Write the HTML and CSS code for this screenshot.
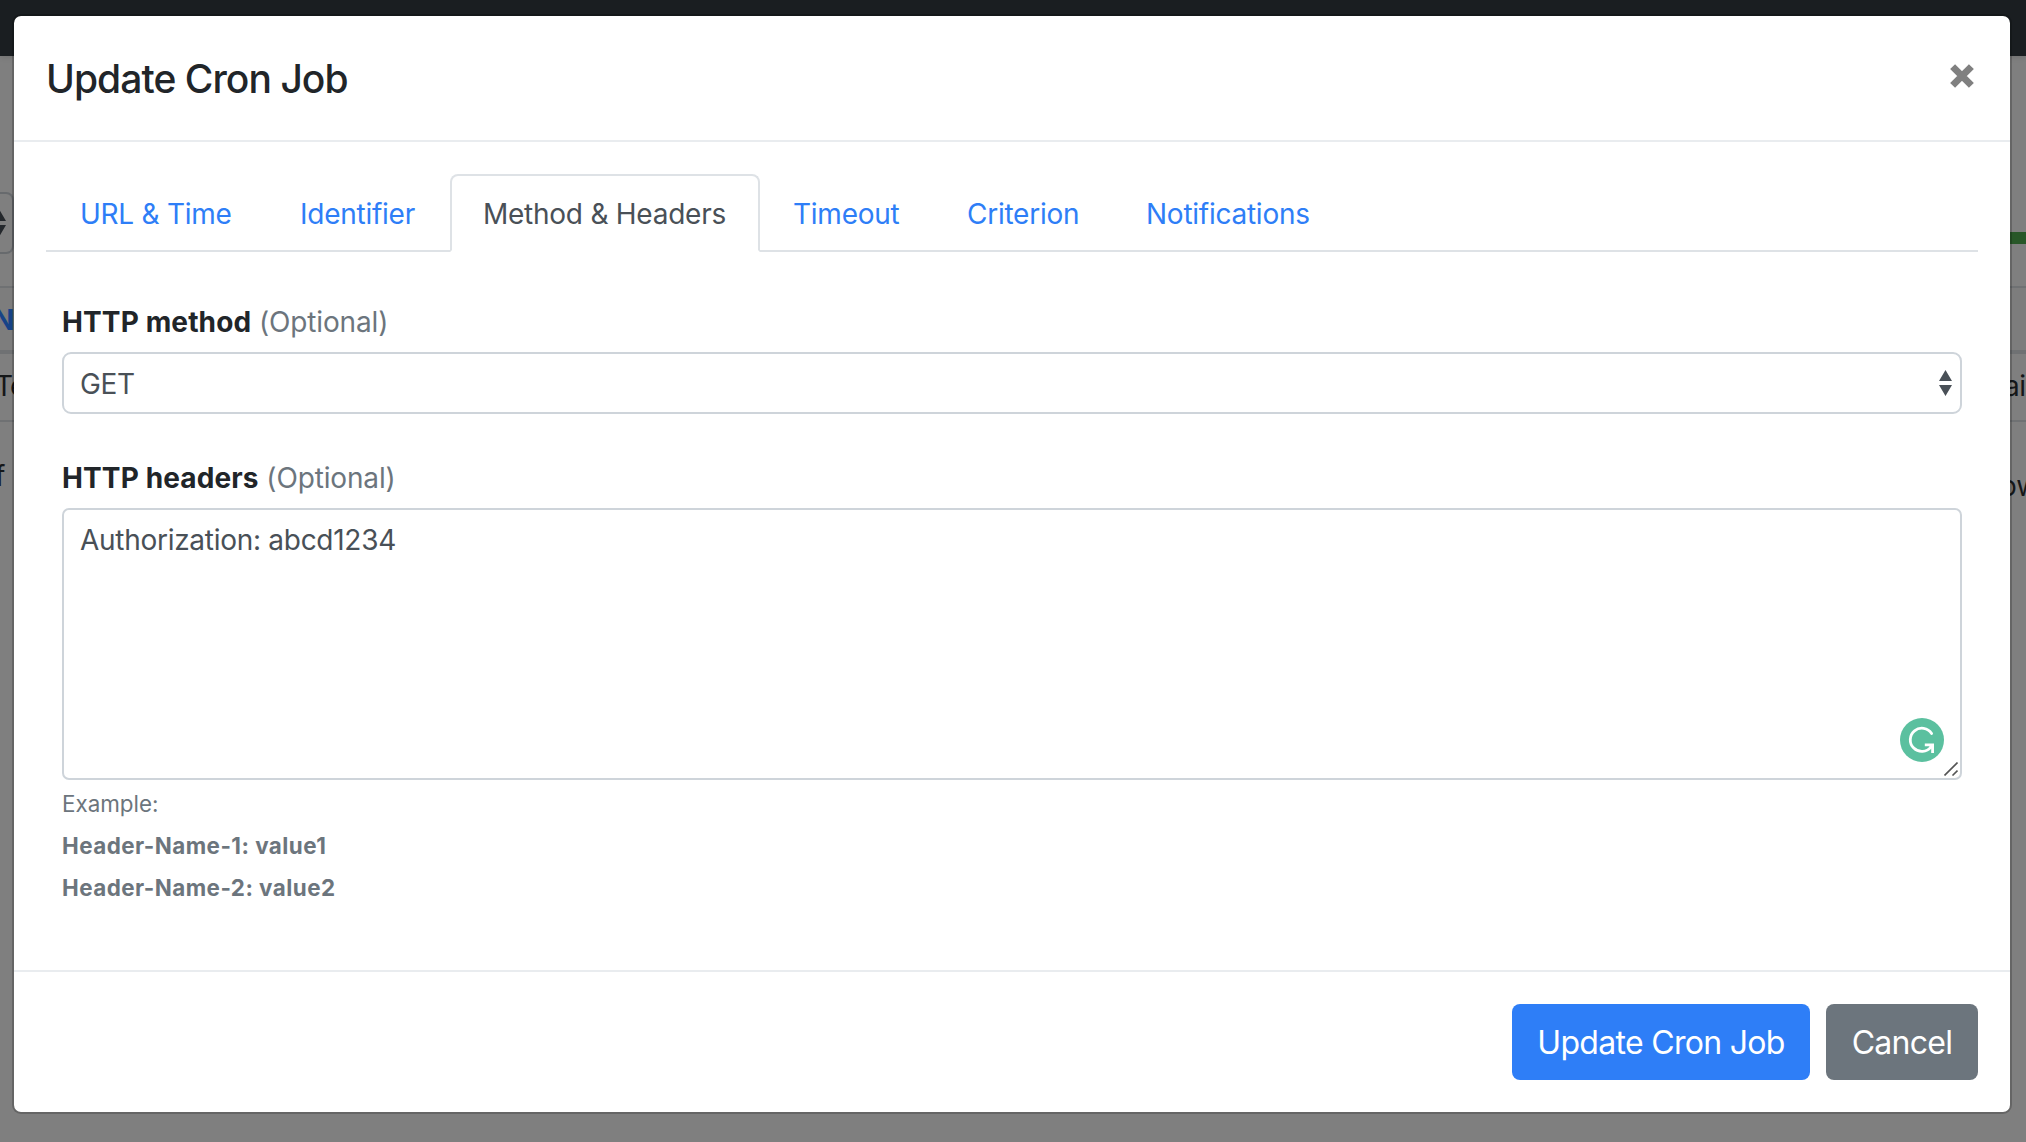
FILE: index.html
```html
<!DOCTYPE html>
<html lang="en">
<head>
<meta charset="utf-8">
<title>Update Cron Job</title>
<link rel="stylesheet" href="styles.css">
</head>
<body>
<div class="page">
  <div class="navbar"></div>
  <div class="toolbar">
    <div class="page-select">
      <svg width="13" height="26" viewBox="0 0 13 26"><path d="M6.5 0L13 11H0zM0 15h13L6.5 26z" fill="#24282c"/></svg>
    </div>
    <div class="progress"></div>
  </div>
  <div class="row row-head"><span class="cell-name">N</span></div>
  <div class="row row-data"><span class="cell-title">Te</span><span class="cell-status">ai</span></div>
  <div class="row row-foot"><span class="foot-left">f</span><span class="foot-right">ow</span></div>
</div>

<div class="overlay">
  <div class="modal">
    <div class="modal-header">
      <h5 class="modal-title">Update Cron Job</h5>
      <button class="close" aria-label="Close">
        <svg width="24" height="24" viewBox="0 0 24 24"><path d="M2.6 2.6L21.4 21.4M21.4 2.6L2.6 21.4" stroke="#808080" stroke-width="7"/></svg>
      </button>
    </div>
    <div class="modal-body">
      <div class="tabs">
        <a class="tab t-url">URL &amp; Time</a>
        <a class="tab t-id">Identifier</a>
        <a class="tab t-method active">Method &amp; Headers</a>
        <a class="tab t-timeout">Timeout</a>
        <a class="tab t-criterion">Criterion</a>
        <a class="tab t-notify">Notifications</a>
      </div>
      <div class="form">
        <div class="label"><strong>HTTP method</strong> <span class="muted">(Optional)</span></div>
        <div class="select">
          <span>GET</span>
          <svg width="13" height="26" viewBox="0 0 13 26"><path d="M6.5 0L13 11H0zM0 15h13L6.5 26z" fill="#495057"/></svg>
        </div>
        <div class="label label-headers"><strong>HTTP headers</strong> <span class="muted">(Optional)</span></div>
        <div class="textarea">
          <span>Authorization: abcd1234</span>
          <svg class="badge" width="44" height="44" viewBox="0 0 44 44"><circle cx="22" cy="22" r="22" fill="#5bc09f"/><path d="M31.6 15.5A11.6 11.6 0 1 0 31 29" fill="none" stroke="#fff" stroke-width="2.8" stroke-linecap="round"/><path d="M24.8 26.8H32.6V35" fill="none" stroke="#fff" stroke-width="2.8"/><path d="M28 27h5v5z" fill="#fff"/></svg>
          <svg class="grip" width="14" height="14" viewBox="0 0 14 14"><path d="M.5 13.5L13.5 .5M8.5 13.5L13.5 8.5" stroke="#555" stroke-width="1.6"/></svg>
        </div>
        <div class="help">
          <div class="example">Example:</div>
          <div><b>Header-Name-1: value1</b></div>
          <div><b>Header-Name-2: value2</b></div>
        </div>
      </div>
    </div>
    <div class="modal-footer">
      <button class="btn btn-primary">Update Cron Job</button>
      <button class="btn btn-secondary">Cancel</button>
    </div>
  </div>
</div>
</body>
</html>
```
FILE: styles.css
```css
* { box-sizing: border-box; }
html, body { height: 100%; }
body {
  margin: 0;
  overflow: hidden;
  position: relative;
  background: #7f7f7f;
  font-family: Inter, "Liberation Sans", sans-serif;
  font-size: 28px;
  line-height: 42px;
  color: #212529;
}
svg { display: block; flex: none; }

.page { color: #151719; }
.navbar { height: 56px; background: #1a1e21; box-shadow: 0 1px 6px rgba(0, 0, 0, .12); }
.toolbar { height: 230px; padding-top: 136px; display: flex; justify-content: space-between; }
.page-select {
  width: 22px;
  height: 62px;
  margin-left: -8px;
  border: 2px solid #676a6d;
  border-left: 0;
  border-radius: 0 8px 8px 0;
  display: flex;
  align-items: center;
}
.page-select svg { margin-left: 1px; }
.progress { width: 26px; height: 12px; margin-top: 40px; background: #285728; }
.row { display: flex; justify-content: space-between; border-top: 2px solid #6f7173; white-space: nowrap; }
.row-head { height: 64px; padding-top: 11px; background: #7d7d7d; }
.cell-name { margin-left: -7px; font-weight: 700; color: #174387; }
.row-data { height: 70px; border-top-width: 4px; padding-top: 11px; }
.cell-title { margin-left: -5px; letter-spacing: -1px; }
.cell-status { width: 22px; letter-spacing: -.5px; }
.row-foot { padding-top: 33px; }
.foot-left { margin-left: -5px; }
.foot-right { width: 26px; margin-top: 10px; }

.overlay { position: absolute; inset: 0; padding: 14px 14px 0 12px; }
.modal {
  height: 1100px;
  border: 2px solid rgba(0, 0, 0, .2);
  border-radius: 9px;
  background: #fff;
  background-clip: padding-box;
  display: flex;
  flex-direction: column;
}
.modal-header {
  height: 126px;
  padding: 32px 36px 0 32px;
  border-bottom: 2px solid #e9ecef;
  display: flex;
  justify-content: space-between;
}
.modal-title { margin: 0; padding-top: 1px; font-size: 39px; line-height: 60px; font-weight: 550; letter-spacing: -.95px; }
.close { height: 24px; margin-top: 16px; padding: 0; border: 0; background: none; }
.close svg { overflow: visible; }
.modal-body { flex: 1; padding: 32px; }

.tabs { height: 78px; border-bottom: 2px solid #dee2e6; display: flex; }
.tab {
  height: 78px;
  padding: 17px 0 0 32px;
  border: 2px solid transparent;
  border-radius: 8px 8px 0 0;
  color: #2e7ef7;
  white-space: nowrap;
  letter-spacing: -.25px;
}
.tab.active {
  padding-left: 31px;
  color: #495057;
  background: #fff;
  border-color: #dee2e6 #dee2e6 #fff;
}
.t-url { width: 219px; }
.t-id { width: 185px; padding-left: 33px; }
.t-method { width: 310px; }
.t-timeout { width: 173px; padding-left: 31px; }
.t-criterion { width: 179px; }
.t-notify { width: 230px; }

.form { padding: 48px 16px 0; }
.label { height: 52px; letter-spacing: -.15px; padding-top: 1px; }
.label strong { letter-spacing: .12px; }
.muted { color: #6c757d; }
.select {
  height: 62px;
  padding: 0 8px 0 16px;
  border: 2px solid #ced4da;
  border-radius: 9px;
  color: #495057;
  display: flex;
  align-items: center;
  justify-content: space-between;
}
.select span { padding-top: 2px; letter-spacing: -.4px; }
.label-headers { height: 94px; padding-top: 43px; }
.textarea {
  position: relative;
  height: 272px;
  padding: 9px 16px;
  border: 2px solid #ced4da;
  border-radius: 7px;
  color: #495057;
  letter-spacing: -.28px;
}
.badge { position: absolute; right: 16px; bottom: 16px; }
.grip { position: absolute; right: 2px; bottom: 2px; }
.help { padding-top: 3px; font-size: 22.4px; color: #6c757d; }
.help b { letter-spacing: .46px; }

.modal-footer {
  height: 142px;
  padding: 32px 32px 0;
  border-top: 2px solid #e9ecef;
  display: flex;
  justify-content: flex-end;
  gap: 16px;
}
.btn {
  height: 76px;
  padding: 1px 0 0;
  border: 0;
  border-radius: 8px;
  color: #fff;
  font: 400 32px/75px Inter, "Liberation Sans", sans-serif;
  letter-spacing: -.7px;
}
.btn-primary { width: 298px; background: #2e7ef7; }
.btn-secondary { width: 152px; background: #6c757d; }
```
